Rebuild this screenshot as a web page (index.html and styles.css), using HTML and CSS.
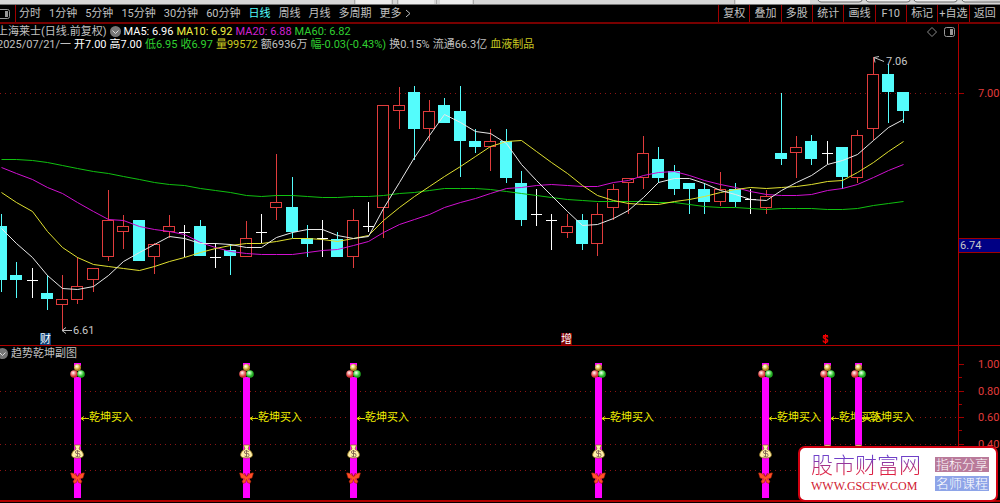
FILE: index.html
```
<!DOCTYPE html>
<html lang="zh-CN">

<head>
  <meta charset="UTF-8">
  <meta name="viewport" content="width=device-width, initial-scale=1.0">
  <title>上海莱士 日线</title>
  <link rel="stylesheet" href="styles.css">
</head>

<body>
  <div class="window-strip">
    <svg width="1000" height="5" viewBox="0 0 1000 5">
      <rect width="1000" height="5" fill="#d6d6d6" />
      <path d="M356 0h35v4h-35zM399 0h35v4h-35zM440 0h32v4h-32zM736 0h74v4h-74z" fill="#ececec" />
      <path d="M354.500 0v4M392.500 0v4M397.500 0v4M436.500 0v4M473.500 0v4M734.500 0v4" stroke="#aaa" />
      <path d="M818 0q1 2 3 2h38q3 0 3-2M866 0q1 2 3 2h38q3 0 3-2M914 0q1 2 3 2h37q3 0 3-2M962 0q1 2 3 2h35" fill="#eee" stroke="#666" />
      <path d="M0 4.500h1000" stroke="#777" />
    </svg>
  </div>

  <header class="toolbar">
    <button class="panel-toggle" aria-label="侧栏">
      <svg width="10" height="10" viewBox="0 0 10 10"><path d="M0 .5h7.500q2 0 2 2v5q0 2-2 2H0" fill="none" stroke="#999" /><path d="M5 2h3v6H5z" fill="#999" /></svg>
    </button>
    <nav class="periods">
      <button>分时</button>
      <button>1分钟</button>
      <button>5分钟</button>
      <button>15分钟</button>
      <button>30分钟</button>
      <button>60分钟</button>
      <button class="active">日线</button>
      <button>周线</button>
      <button>月线</button>
      <button>多周期</button>
      <button>更多
        <svg width="6" height="9" viewBox="0 0 6 9"><path d="M1 1l4 3.500-4 3.500" fill="none" stroke="#c0c0c0" /></svg>
      </button>
    </nav>
    <nav class="tools">
      <button>复权</button>
      <button>叠加</button>
      <button>多股</button>
      <button>统计</button>
      <button>画线</button>
      <button>F10</button>
      <button>标记</button>
      <button>+自选</button>
      <button>返回</button>
    </nav>
  </header>

  <main>
    <section class="panel price-panel">
      <div class="plot">
        <svg class="chart" viewBox="0 24 958 321">
          <path class="grid" d="M0 93.500H958" />
          <g id="candles"></g>
          <g id="averages"></g>
          <path class="pointer" d="M72 330.500H62m4-3l-4 3 4 3M884 61.500l-10-4m5-1l-5 1 1 5" />
          <text class="extreme" x="73" y="334">6.61</text>
          <text class="extreme" x="886" y="65">7.06</text>
          <rect x="40" y="333" width="11" height="12" fill="#0b3c70" />
          <text class="event" x="40" y="343">财</text>
          <rect x="561" y="333" width="11" height="12" fill="#7c0000" />
          <text class="event" x="561" y="343">增</text>
          <text class="dividend" x="822" y="343">S</text>
          <path d="M823 335.500h5M825.500 334v10" stroke="#f00000" />
        </svg>
        <div class="quote">
          <div class="quote-row">
            <span>上海莱士(日线.前复权)</span>
            <svg width="11" height="11" viewBox="0 0 11 11"><circle cx="5.500" cy="5.500" r="5.500" fill="#777" /><path d="M2.500 4.500l3 3 3-3" fill="none" stroke="#ddd" /></svg>
            <span class="white">MA5: 6.96</span>
            <span class="yellow">MA10: 6.92</span>
            <span class="magenta">MA20: 6.88</span>
            <span class="green">MA60: 6.82</span>
          </div>
          <div class="quote-row">
            <span>2025/07/21/一</span>
            <span class="white">开7.00</span>
            <span class="white">高7.00</span>
            <span class="green">低6.95</span>
            <span class="green">收6.97</span>
            <span class="gold">量99572</span>
            <span>额6936万</span>
            <span class="green">幅-0.03(-0.43%)</span>
            <span>换0.15%</span>
            <span>流通66.3亿</span>
            <span class="gold">血液制品</span>
          </div>
        </div>
        <div class="plot-icons">
          <svg width="10" height="10" viewBox="0 0 10 10"><path d="M5 .5L9.500 5 5 9.500.5 5z" fill="none" stroke="#888" /></svg>
          <svg width="11" height="10" viewBox="0 0 11 10"><rect x=".5" y=".5" width="10" height="9" rx="2" fill="none" stroke="#999" /><path d="M6 2h3v6H6z" fill="#999" /></svg>
        </div>
      </div>
      <svg class="axis" width="42" height="321" viewBox="0 24 41 321">
        <path class="tick" d="M0 93.500h5" />
        <text class="scale" x="19" y="97">7.00</text>
        <rect x="0" y="238" width="41" height="14" fill="#000084" />
        <path class="tick" d="M0 238.500h41M0 252.500h41" />
        <text class="current" x="1" y="249">6.74</text>
      </svg>
    </section>

    <section class="panel signal-panel">
      <div class="plot">
        <svg class="chart" viewBox="0 346 958 154">
          <defs>
            <radialGradient id="red-ball" cx=".4" cy=".35"><stop offset="0" stop-color="#fff" /><stop offset=".5" stop-color="#f48c8c" /><stop offset="1" stop-color="#d03030" /></radialGradient>
            <radialGradient id="green-ball" cx=".4" cy=".35"><stop offset="0" stop-color="#fff" /><stop offset=".5" stop-color="#7cec7c" /><stop offset="1" stop-color="#20a820" /></radialGradient>
            <radialGradient id="gold-ball" cx=".4" cy=".35"><stop offset="0" stop-color="#fff" /><stop offset=".5" stop-color="#ecd478" /><stop offset="1" stop-color="#b08820" /></radialGradient>
            <g id="signal">
              <rect x="-3" y="363" width="7" height="135" fill="#ff00ff" />
              <path d="M-3 366h7v11h-7z" fill="#000" />
              <circle cx=".5" cy="367.500" r="3.500" fill="url(#gold-ball)" />
              <circle cx="-3" cy="374" r="3.800" fill="url(#red-ball)" />
              <circle cx="4" cy="374" r="3.800" fill="url(#green-ball)" />
              <path d="M-2.500 445h6l-1.500 4q4.500 2.500 4.500 6 0 3-6 3t-6-3q0-3.500 4.500-6z" fill="#fff0a8" stroke="#8a6a10" stroke-width=".7" />
              <path d="M2.800 451.500q-4.500-1.500-4.500 .5t2.500 1.500 2.200 2-4.500 .5M.5 450v7" fill="none" stroke="#806050" stroke-width=".9" />
              <path d="M.5 477l-2-4 1.500 3q-4-4-6.500-3l1.500 5 3.500 1-2.500 2 1 2.500 2.500-1 1-3 1 3 2.500 1 1-2.500-2.500-2 3.500-1 1.500-5q-2.500-1-6.500 3l1.500-3z" fill="#ff5028" stroke="#a01800" stroke-width=".5" />
              <path d="M12 418.500H4m3-2l-3 2 3 2" fill="none" stroke="#d8d800" />
              <text class="buy" x="12" y="421">乾坤买入</text>
            </g>
          </defs>
          <path class="grid" d="M0 391.500H958M0 417.500H958M0 444.500H958M0 470.500H958" />
          <use href="#signal" x="77" />
          <use href="#signal" x="246" />
          <use href="#signal" x="353" />
          <use href="#signal" x="598" />
          <use href="#signal" x="765" />
          <use href="#signal" x="827" />
          <use href="#signal" x="858" />
        </svg>
        <div class="indicator">
          <svg width="11" height="11" viewBox="0 0 11 11"><circle cx="5.500" cy="5.500" r="5.500" fill="#777" /><path d="M2.500 4.500l3 3 3-3" fill="none" stroke="#ddd" /></svg>
          <span>趋势乾坤副图</span>
        </div>
      </div>
      <svg class="axis" width="42" height="154" viewBox="0 346 41 154">
        <path class="tick" d="M0 364.500h5M0 377.500h3M0 391.500h5M0 404.500h3M0 417.500h5M0 430.500h3M0 444.500h5M0 457.500h3M0 470.500h5" />
        <text class="scale" x="19" y="368">1.00</text>
        <text class="scale" x="19" y="395">0.80</text>
        <text class="scale" x="19" y="421">0.60</text>
        <text class="scale" x="19" y="448">0.40</text>
      </svg>
    </section>
  </main>

  <aside class="banner">
    <div class="site">
      <div class="site-name">股市财富网</div>
      <div class="site-url">WWW.GSCFW.COM</div>
    </div>
    <div class="site-links">
      <a class="share" href="#">指标分享</a>
      <a class="course" href="#">名师课程</a>
    </div>
  </aside>

  <script src="chart.js"></script>
</body>

</html>
```
FILE: styles.css
```
* {
  box-sizing: border-box;
}

body {
  margin: 0;
  min-height: 100vh;
  overflow-x: hidden;
  background: #000;
  color: #c0c0c0;
  font-family: Roboto, "Noto Sans CJK SC", sans-serif;
  font-size: 11px;
  line-height: 13px;
}

svg {
  display: block;
}

button {
  padding: 0;
  border: none;
  background: none;
  color: inherit;
  font: inherit;
  white-space: nowrap;
}

.window-strip {
  height: 5px;
  overflow: hidden;
  background: #d6d6d6;
}

/* top toolbar */
.toolbar {
  display: flex;
  height: 19px;
  border-bottom: 2px solid #780000;
}

.panel-toggle {
  width: 16px;
  border-right: 1px solid #a00000;
}

.periods {
  display: flex;
  flex: 1;
  gap: 8px;
  padding-left: 3px;
}

.periods button {
  display: flex;
  align-items: center;
  gap: 3px;
}

.periods .active {
  color: #54fcfc;
}

.tools {
  display: flex;
  width: 282px;
}

.tools button {
  flex: 1 1 0;
  min-width: 0;
  border-left: 1px solid #a00000;
}

/* panels */
.panel {
  display: flex;
  border-bottom: 1px solid #b00000;
}

.signal-panel {
  border-bottom-width: 2px;
}

.plot {
  position: relative;
  flex: 1;
  min-width: 0;
}

.chart {
  width: 100%;
}

.axis {
  flex: none;
  overflow: visible;
  border-left: 1px solid #b00000;
}

.quote {
  position: absolute;
  top: 1px;
  left: -3px;
}

.quote-row {
  display: flex;
  align-items: center;
  gap: 3px;
  white-space: nowrap;
}

.plot-icons {
  position: absolute;
  top: 3px;
  right: 3px;
  display: flex;
  gap: 7px;
}

.indicator {
  position: absolute;
  top: 1px;
  left: -3px;
  display: flex;
  align-items: center;
  gap: 3px;
}

.white {
  color: #fff;
}

.yellow {
  color: #f0f040;
}

.magenta {
  color: #d020d0;
}

.green {
  color: #30d030;
}

.gold {
  color: #c8c820;
}

/* chart drawing */
.grid {
  stroke: #8c1414;
  stroke-dasharray: 1 4;
}

.tick {
  stroke: #a00000;
}

.pointer {
  fill: none;
  stroke: #c0c0c0;
}

.up {
  fill: #000;
  stroke: #e03c3c;
  shape-rendering: crispEdges;
}

.down {
  fill: #54fcfc;
  stroke: #54fcfc;
  shape-rendering: crispEdges;
}

.flat {
  stroke: #fff;
  shape-rendering: crispEdges;
}

.ma {
  fill: none;
}

.ma5 {
  stroke: #e8e8e8;
}

.ma10 {
  stroke: #e0e030;
}

.ma20 {
  stroke: #d010d0;
}

.ma60 {
  stroke: #10c010;
}

.extreme,
.current {
  fill: #c8c8c8;
}

.event {
  fill: #fff;
}

.dividend {
  fill: #f00000;
  font-size: 10px;
  font-weight: bold;
}

.scale {
  fill: #e03c3c;
}

.buy {
  fill: #f0f000;
}

/* site banner */
.banner {
  position: absolute;
  right: 2px;
  bottom: 1px;
  display: flex;
  align-items: center;
  justify-content: space-between;
  width: 200px;
  height: 56px;
  padding: 0 7px 0 11px;
  border: 2px solid #d00010;
  border-radius: 7px;
  background: #fff;
}

.site-name {
  background: linear-gradient(#7040c8 20%, #e02040 80%);
  background-clip: text;
  -webkit-background-clip: text;
  color: transparent;
  font-size: 22px;
  font-weight: 300;
  line-height: 24px;
}

.site-url {
  color: #d02030;
  font-family: "Liberation Serif", serif;
  font-size: 12px;
  line-height: 16px;
}

.site-links {
  display: flex;
  flex-direction: column;
  gap: 4px;
}

.site-links a {
  padding: 0 1px;
  color: #fff;
  font-family: "Liberation Serif", "Noto Sans CJK SC", serif;
  font-size: 13px;
  font-weight: 300;
  line-height: 15px;
  text-decoration: none;
}

.share {
  background: #b97a9a;
}

.course {
  background: #8ea4e8;
}
```
FILE: chart.js
```
var SVG = "http://www.w3.org/2000/svg";
var STEP = 15.29;

// kind, high, body top, body bottom, low
var candles = [
  ["down", 214, 226, 280, 292], ["down", 262, 275, 280, 298], ["flat", 268, 280, 280, 298],
  ["down", 275, 293, 299, 310], ["up", 275, 299, 305, 330], ["up", 257, 286, 300, 304],
  ["up", 268, 268, 280, 292], ["up", 190, 220, 257, 261], ["up", 215, 226, 232, 249],
  ["down", 220, 220, 261, 261], ["up", 243, 244, 257, 274], ["up", 215, 226, 232, 238],
  ["flat", 225, 232, 232, 257], ["down", 220, 226, 256, 256], ["flat", 243, 257, 257, 268],
  ["down", 244, 250, 256, 275], ["up", 221, 238, 257, 257], ["flat", 214, 232, 232, 243],
  ["up", 154, 202, 208, 220], ["down", 177, 207, 232, 238], ["down", 225, 238, 244, 257],
  ["flat", 220, 238, 238, 257], ["down", 232, 239, 257, 257], ["up", 209, 220, 257, 268],
  ["flat", 202, 226, 226, 232], ["up", 105, 105, 208, 238], ["up", 87, 105, 111, 129],
  ["down", 86, 92, 129, 160], ["up", 100, 111, 129, 141], ["down", 98, 105, 123, 123],
  ["down", 86, 111, 141, 177], ["down", 129, 141, 147, 153], ["up", 129, 141, 147, 171],
  ["down", 129, 141, 178, 183], ["down", 171, 183, 220, 226], ["flat", 189, 214, 214, 226],
  ["flat", 214, 220, 220, 250], ["up", 214, 226, 233, 238], ["down", 214, 220, 244, 250],
  ["up", 203, 214, 244, 256], ["up", 184, 189, 208, 220], ["up", 178, 178, 183, 214],
  ["up", 136, 153, 178, 189], ["down", 147, 159, 178, 183], ["down", 165, 171, 189, 195],
  ["down", 183, 183, 189, 214], ["down", 183, 189, 202, 214], ["up", 172, 189, 202, 206],
  ["down", 183, 189, 202, 207], ["flat", 189, 199, 199, 214], ["up", 190, 196, 208, 214],
  ["down", 93, 153, 159, 165], ["up", 136, 147, 153, 178], ["down", 135, 141, 159, 165],
  ["flat", 141, 153, 153, 164], ["down", 147, 147, 177, 189], ["up", 130, 135, 178, 183],
  ["up", 57, 74, 129, 140], ["down", 64, 74, 92, 123], ["down", 92, 92, 111, 123]
];

// one value per candle
var averages = {
  ma60: [159, 159, 160, 162, 165, 168, 171, 173, 176, 179, 182, 184, 185, 188, 190, 192, 195, 196, 195, 195,
    196, 197, 197, 196, 196, 195, 193, 192, 190, 188, 188, 188, 189, 191, 193, 195, 197, 199, 200, 201,
    201, 201, 201, 202, 202, 204, 206, 207, 207, 208, 209, 208, 208, 208, 209, 209, 208, 205, 203, 201],
  ma20: [167, 173, 179, 187, 193, 202, 211, 219, 220, 226, 229, 231, 234, 242, 247, 251, 253, 254, 254, 254,
    252, 250, 249, 245, 241, 232, 224, 219, 214, 207, 202, 198, 193, 188, 187, 185, 184, 185, 186, 186,
    182, 180, 175, 172, 171, 175, 180, 184, 187, 191, 194, 195, 195, 194, 190, 188, 184, 177, 170, 164],
  ma10: [192, 202, 211, 231, 247, 257, 264, 266, 268, 270, 266, 261, 257, 252, 248, 245, 243, 243, 241, 238,
    238, 239, 241, 238, 235, 220, 207, 196, 186, 176, 166, 156, 146, 141, 140, 151, 162, 173, 185, 195,
    200, 203, 204, 204, 201, 199, 196, 192, 189, 187, 188, 187, 186, 184, 181, 180, 172, 162, 151, 141],
  ma5: [228, 243, 257, 275, 288, 289, 286, 275, 261, 252, 244, 236, 238, 243, 243, 244, 247, 247, 237, 232,
    229, 229, 235, 238, 236, 208, 182, 157, 135, 114, 122, 131, 133, 143, 164, 180, 195, 211, 225, 224,
    218, 210, 197, 182, 178, 178, 183, 190, 194, 199, 200, 190, 182, 175, 164, 160, 154, 140, 127, 119]
};

function addPath(parent, className, d) {
  var path = document.createElementNS(SVG, "path");
  path.setAttribute("class", className);
  path.setAttribute("d", d);
  parent.appendChild(path);
}

function xAt(i) {
  return Math.round(1 + i * STEP) + 0.5;
}

var candleGroup = document.getElementById("candles");
candles.forEach(function (c, i) {
  var x = xAt(i);
  var top = c[2] + 0.5;
  var bottom = c[3] - 0.5;
  if (c[0] === "flat") {
    addPath(candleGroup, "flat", "M" + x + " " + c[1] + "V" + c[4] + "M" + (x - 5.5) + " " + top + "h11");
    return;
  }
  addPath(candleGroup, c[0], "M" + x + " " + c[1] + "V" + top + "M" + x + " " + bottom + "V" + c[4] +
    "M" + (x - 6) + " " + top + "h11V" + bottom + "h-11z");
});

var averageGroup = document.getElementById("averages");
Object.keys(averages).forEach(function (name) {
  var points = averages[name].map(function (y, i) {
    return xAt(i) + " " + (y + 0.5);
  });
  addPath(averageGroup, "ma " + name, "M" + points.join("L"));
});
```
